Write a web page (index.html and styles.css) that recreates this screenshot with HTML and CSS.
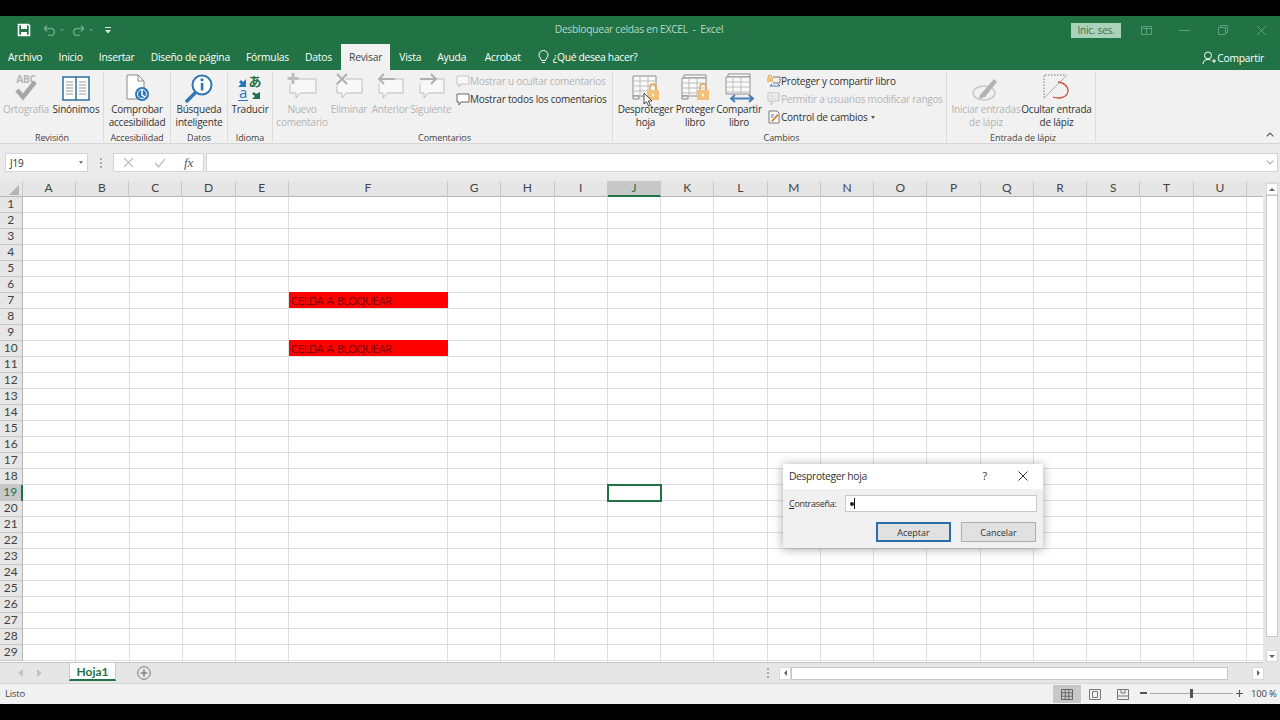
FILE: index.html
```html
<!DOCTYPE html>
<html lang="es">
<head>
<meta charset="utf-8">
<title>Desbloquear celdas en EXCEL - Excel</title>
<link rel="stylesheet" href="styles.css">
</head>
<body>
<div class="app">
  <header class="titlebar">
    <div class="qat">
      <svg class="qi" width="14" height="14" viewBox="0 0 14 14"><path d="M1.500 1.500h10l1 1v10h-11z" fill="none" stroke="#fff" stroke-width="1.600"/><rect x="4" y="2" width="6" height="4" fill="#fff"/><rect x="4" y="9" width="6" height="3.500" fill="#fff"/></svg>
      <svg class="qi dim" width="13" height="12" viewBox="0 0 13 12"><path d="M1 4.500h7a3.500 3.500 0 0 1 0 7H5M1 4.500l3-3M1 4.500l3 3" fill="none" stroke="#6ba888" stroke-width="1.500"/></svg>
      <i class="caret"></i>
      <svg class="qi dim" width="13" height="12" viewBox="0 0 13 12"><path d="M12 4.500H5a3.500 3.500 0 0 0 0 7h3M12 4.500l-3-3M12 4.500l-3 3" fill="none" stroke="#6ba888" stroke-width="1.500"/></svg>
      <i class="caret"></i>
      <svg class="qi more" width="6" height="7" viewBox="0 0 6 7"><path d="M0 0h6v1H0zM0 3h6L3 6.500z" fill="#d8e8de"/></svg>
    </div>
    <div class="doc-title">Desbloquear celdas en EXCEL&nbsp; -&nbsp; Excel</div>
    <div class="win">
      <button class="signin">Inic. ses.</button>
      <svg width="11" height="9" viewBox="0 0 11 9"><path d="M.5.500h10v8H.5zM.5 2.500h10M5.500 2.500v6" fill="none" stroke="#5f9f7c"/></svg>
      <svg width="11" height="1" viewBox="0 0 11 1"><path d="M0 .5h11" stroke="#5f9f7c"/></svg>
      <svg width="10" height="10" viewBox="0 0 10 10"><path d="M2.500 2.500V.5h7v7h-2M.5 2.500h7v7h-7z" fill="none" stroke="#5f9f7c"/></svg>
      <svg width="11" height="11" viewBox="0 0 11 11"><path d="M1 1l9 9M10 1l-9 9" stroke="#5f9f7c"/></svg>
    </div>
  </header>

  <nav class="tabs">
    <span class="tab">Archivo</span>
    <span class="tab">Inicio</span>
    <span class="tab">Insertar</span>
    <span class="tab">Diseño de página</span>
    <span class="tab">Fórmulas</span>
    <span class="tab">Datos</span>
    <span class="tab active">Revisar</span>
    <span class="tab">Vista</span>
    <span class="tab t-ayuda">Ayuda</span>
    <span class="tab">Acrobat</span>
    <span class="tab tell">
      <svg width="11" height="14" viewBox="0 0 11 14"><path d="M3.500 10.500C3.200 8.500 1 7.500 1 5a4.500 4.500 0 0 1 9 0c0 2.500-2.200 3.500-2.500 5.500zM4 12.500h3" fill="none" stroke="#fff"/></svg>
      ¿Qué desea hacer?
    </span>
    <span class="share">
      <svg width="14" height="14" viewBox="0 0 14 14"><circle cx="6" cy="4.500" r="3.500" fill="none" stroke="#fff"/><path d="M1 13c0-3 2-4.500 5-4.500 1 0 1.800.2 2.500.5M10 10h4M12 8v4" fill="none" stroke="#fff"/></svg>
      Compartir
    </span>
  </nav>

  <section class="ribbon">
    <div class="group g-rev">
      <div class="cmds">
        <div class="cmd w50 off">
          <svg class="ic" width="32" height="30" viewBox="0 0 32 30"><text x="16" y="10" class="abc">ABC</text><path d="M7 17l6 7L25 9" fill="none" stroke="#a6a6a6" stroke-width="4.500"/></svg>
          <span>Ortografía</span>
        </div>
        <div class="cmd w50">
          <svg class="ic" width="32" height="30" viewBox="0 0 32 30"><path d="M3 4h13v23H3zM16 4h13v23H16z" fill="#fff" stroke="#2f6f9f" stroke-width="1.500"/><path d="M6 9h7M6 12h7M6 15h7M6 18h7M6 21h7M19 9h7M19 12h7M19 15h7M19 18h7M19 21h7" stroke="#9a9a9a"/></svg>
          <span>Sinónimos</span>
        </div>
      </div>
      <div class="glabel">Revisión</div>
    </div>
    <div class="group g-acc">
      <div class="cmds">
        <div class="cmd w68">
          <svg class="ic" width="30" height="30" viewBox="0 0 30 30"><path d="M5 2h11l6 6v18H5z" fill="#fff" stroke="#8a8a8a"/><path d="M16 2v6h6" fill="none" stroke="#8a8a8a"/><circle cx="20" cy="21" r="7" fill="#2f78b5"/><circle cx="20" cy="21" r="4.500" fill="none" stroke="#fff"/><path d="M20 17v5l3 2" fill="none" stroke="#fff" stroke-width="1.500"/></svg>
          <span>Comprobar<br>accesibilidad</span>
        </div>
      </div>
      <div class="glabel">Accesibilidad</div>
    </div>
    <div class="group g-dat">
      <div class="cmds">
        <div class="cmd w57">
          <svg class="ic" width="30" height="30" viewBox="0 0 30 30"><path d="M12 19L3 28" stroke="#2f78b5" stroke-width="3.500" stroke-linecap="round"/><circle cx="18" cy="12" r="9.500" fill="#fff" stroke="#2f78b5" stroke-width="2"/><rect x="16.800" y="10" width="2.600" height="7.500" fill="#2f78b5"/><circle cx="18" cy="6.800" r="1.600" fill="#2f78b5"/></svg>
          <span>Búsqueda<br>inteligente</span>
        </div>
      </div>
      <div class="glabel">Datos</div>
    </div>
    <div class="group g-idi">
      <div class="cmds">
        <div class="cmd w44">
          <svg class="ic" width="28" height="30" viewBox="0 0 28 30"><path d="M10 6v8H2l3-3-2-2 2-2 2 2z" fill="#1f78c1"/><text x="19" y="13" class="ja">あ</text><text x="7" y="25" class="lat">a</text><path d="M2 27.500h10" stroke="#1f78c1"/><path d="M16 26v-7h8l-3 3 3 2-2 2-2-2z" fill="#217346" transform="rotate(180 20 22.500)"/></svg>
          <span>Traducir</span>
        </div>
      </div>
      <div class="glabel">Idioma</div>
    </div>
    <div class="group g-com">
      <div class="cmds">
        <div class="cmd w50 off">
          <svg class="ic" width="32" height="30" viewBox="0 0 32 30"><path d="M8 6h22v14H14l-4 5v-5H4v-9" fill="#f8f8f8" stroke="#bdbdbd"/><path d="M7 0v11M1.500 5.500h11" stroke="#bdbdbd" stroke-width="3"/></svg>
          <span>Nuevo<br>comentario</span>
        </div>
        <div class="cmd w44 off">
          <svg class="ic" width="30" height="30" viewBox="0 0 30 30"><path d="M11 6h17v14H12l-4 5v-5H3V10" fill="#f8f8f8" stroke="#bdbdbd"/><path d="M3 1l10 10M13 1L3 11" stroke="#b0b0b0" stroke-width="2"/></svg>
          <span>Eliminar</span>
        </div>
        <div class="cmd w38 off">
          <svg class="ic" width="30" height="30" viewBox="0 0 30 30"><path d="M12 6h16v14H12l-4 5v-5H4V11" fill="#f8f8f8" stroke="#bdbdbd"/><path d="M20 6H4M9 1L4 6l5 5" fill="none" stroke="#b0b0b0" stroke-width="2"/></svg>
          <span>Anterior</span>
        </div>
        <div class="cmd w44 off">
          <svg class="ic" width="30" height="30" viewBox="0 0 30 30"><path d="M18 6h10v14H12l-4 5v-5H4V11" fill="#f8f8f8" stroke="#bdbdbd"/><path d="M4 6h16M15 1l5 5-5 5" fill="none" stroke="#b0b0b0" stroke-width="2"/></svg>
          <span>Siguiente</span>
        </div>
        <div class="stack">
          <div class="sitem off"><svg width="14" height="14" viewBox="0 0 14 14"><path d="M1 2h12v8H5l-2 3v-3H1z" fill="#f8f8f8" stroke="#c4c4c4"/></svg>Mostrar u ocultar comentarios</div>
          <div class="sitem"><svg width="14" height="14" viewBox="0 0 14 14"><path d="M1 2h12v8H5l-2 3v-3H1z" fill="#fff" stroke="#666"/></svg>Mostrar todos los comentarios</div>
        </div>
      </div>
      <div class="glabel">Comentarios</div>
    </div>
    <div class="group g-cam">
      <div class="cmds">
        <div class="cmd w57">
          <svg class="ic" width="32" height="30" viewBox="0 0 32 30"><path class="sh" d="M3 3h23v20H3z"/><path class="gl" d="M3 8h23M3 13h23M3 18h23M10 3v20M18 3v20"/><path d="M3 23h6v3H3z" fill="#eee" stroke="#888"/><rect x="17" y="17" width="12" height="10" fill="#f2c078"/><path d="M20 17v-3a3 3 0 0 1 6 0v3" fill="none" stroke="#e0a850" stroke-width="1.500"/><path d="M23 20.500v3" stroke="#fff" stroke-width="1.500"/></svg>
          <span>Desproteger<br>hoja</span>
        </div>
        <div class="cmd w42">
          <svg class="ic" width="32" height="30" viewBox="0 0 32 30"><path class="sh" d="M5 2h22v3H5z"/><path class="sh" d="M3 5h24v18H3z"/><path class="gl" d="M3 10h24M3 15h24M3 20h24M10 5v18M18 5v18"/><path d="M3 23h6v3H3z" fill="#eee" stroke="#888"/><rect x="18" y="17" width="12" height="10" fill="#f2c078"/><path d="M21 17v-3a3 3 0 0 1 6 0v3" fill="none" stroke="#e0a850" stroke-width="1.500"/><path d="M24 20.500v3" stroke="#fff" stroke-width="1.500"/></svg>
          <span>Proteger<br>libro</span>
        </div>
        <div class="cmd w46">
          <svg class="ic" width="32" height="30" viewBox="0 0 32 30"><path class="sh" d="M5 1h22v3H5z"/><path class="sh" d="M3 4h24v17H3z"/><path class="gl" d="M3 9h24M3 14h24M3 19h24M10 4v17M18 4v17"/><path d="M8 25.500h22M12 22l-4 3.500 4 3.500M26 22l4 3.500-4 3.500" fill="none" stroke="#4a7fb5" stroke-width="2"/></svg>
          <span>Compartir<br>libro</span>
        </div>
        <div class="stack">
          <div class="sitem"><svg width="14" height="14" viewBox="0 0 14 14"><rect x="0" y="3" width="6" height="5" fill="#f2c078"/><path d="M1.500 3V1.500h3V3" fill="none" stroke="#e0a850"/><path d="M6 3h7v6H6" fill="none" stroke="#777"/><path d="M3 12h10M3 12l2-2M13 12l-2-2" stroke="#3f78b0" fill="none"/></svg>Proteger y compartir libro</div>
          <div class="sitem off"><svg width="14" height="14" viewBox="0 0 14 14"><path d="M1 1h11v8H6l-2 4V9H1z" fill="#f4f4f4" stroke="#c4c4c4"/><path d="M1 4h11M1 7h11M5 1v8" stroke="#d4d4d4"/></svg>Permitir a usuarios modificar rangos</div>
          <div class="sitem"><svg width="14" height="14" viewBox="0 0 14 14"><path d="M2 1h8l2 2v10H2z" fill="#fff" stroke="#777"/><path d="M4 11l6-7 1.500 1.500-6 6.500z" fill="#d9853b"/><path d="M4 5h3M4 7h2" stroke="#3f78b0"/></svg>Control de cambios<i class="mini"></i></div>
        </div>
      </div>
      <div class="glabel">Cambios</div>
    </div>
    <div class="group g-ink">
      <div class="cmds">
        <div class="cmd w70 off">
          <svg class="ic" width="32" height="30" viewBox="0 0 32 30"><ellipse cx="14" cy="20" rx="11" ry="7" fill="none" stroke="#c8c8c8" stroke-width="1.500"/><path d="M10 22L24 6l3 3-12 15-6 2z" fill="#b3b3b3"/></svg>
          <span>Iniciar entradas<br>de lápiz</span>
        </div>
        <div class="cmd w71">
          <svg class="ic" width="32" height="30" viewBox="0 0 32 30"><path d="M3 25V2h22" fill="none" stroke="#777" stroke-dasharray="1.500 1.500"/><path d="M3 25L26 2" stroke="#aaa"/><path d="M17 9c8 1 12 7 9 12-2 4-9 5-14 3" fill="none" stroke="#c9543a" stroke-width="1.300"/></svg>
          <span>Ocultar entrada<br>de lápiz</span>
        </div>
      </div>
      <div class="glabel">Entrada de lápiz</div>
    </div>
    <svg class="collapse" width="8" height="5" viewBox="0 0 8 5"><path d="M.7 4.300L4 1l3.300 3.300" fill="none" stroke="#555" stroke-width="1.200"/></svg>
  </section>

  <section class="formula">
    <div class="namebox"><span>J19</span><i class="mini"></i></div>
    <span class="grip"></span>
    <div class="fxbox">
      <svg width="11" height="11" viewBox="0 0 11 11"><path d="M1 1l9 9M10 1l-9 9" stroke="#bdbdbd" stroke-width="1.200"/></svg>
      <svg width="12" height="10" viewBox="0 0 12 10"><path d="M1 5l3.500 4L11 1" fill="none" stroke="#bdbdbd" stroke-width="1.200"/></svg>
      <span class="fx">fx</span>
    </div>
    <div class="finput"><svg width="8" height="5" viewBox="0 0 8 5"><path d="M.7.700L4 4l3.300-3.300" fill="none" stroke="#aaa" stroke-width="1.100"/></svg></div>
  </section>

  <section class="workarea">
    <div class="grid">
      <div class="row head">
        <span class="corner"><i></i></span><span>A</span><span>B</span><span>C</span><span>D</span><span>E</span><span>F</span><span>G</span><span>H</span><span>I</span><span class="cur">J</span><span>K</span><span>L</span><span>M</span><span>N</span><span>O</span><span>P</span><span>Q</span><span>R</span><span>S</span><span>T</span><span>U</span>
      </div>
      <div class="sheet">
        <div class="row"><span class="rh">1</span></div>
        <div class="row"><span class="rh">2</span></div>
        <div class="row"><span class="rh">3</span></div>
        <div class="row"><span class="rh">4</span></div>
        <div class="row"><span class="rh">5</span></div>
        <div class="row"><span class="rh">6</span></div>
        <div class="row"><span class="rh">7</span><span class="red">CELDA A BLOQUEAR</span></div>
        <div class="row"><span class="rh">8</span></div>
        <div class="row"><span class="rh">9</span></div>
        <div class="row"><span class="rh">10</span><span class="red">CELDA A BLOQUEAR</span></div>
        <div class="row"><span class="rh">11</span></div>
        <div class="row"><span class="rh">12</span></div>
        <div class="row"><span class="rh">13</span></div>
        <div class="row"><span class="rh">14</span></div>
        <div class="row"><span class="rh">15</span></div>
        <div class="row"><span class="rh">16</span></div>
        <div class="row"><span class="rh">17</span></div>
        <div class="row"><span class="rh">18</span></div>
        <div class="row"><span class="rh cur">19</span><span class="sel"></span></div>
        <div class="row"><span class="rh">20</span></div>
        <div class="row"><span class="rh">21</span></div>
        <div class="row"><span class="rh">22</span></div>
        <div class="row"><span class="rh">23</span></div>
        <div class="row"><span class="rh">24</span></div>
        <div class="row"><span class="rh">25</span></div>
        <div class="row"><span class="rh">26</span></div>
        <div class="row"><span class="rh">27</span></div>
        <div class="row"><span class="rh">28</span></div>
        <div class="row"><span class="rh">29</span></div>
      </div>
    </div>
    <aside class="vscroll">
      <b class="sbtn"><i class="up"></i></b>
      <b class="sthumb"></b>
      <b class="sbtn"><i class="down"></i></b>
    </aside>
  </section>

  <section class="sheetbar">
    <div class="navs">
      <svg width="5" height="8" viewBox="0 0 5 8"><path d="M5 0v8L0 4z" fill="#c4c4c4"/></svg>
      <svg width="5" height="8" viewBox="0 0 5 8"><path d="M0 0v8l5-4z" fill="#c4c4c4"/></svg>
    </div>
    <div class="sheettab">Hoja1</div>
    <svg class="addsheet" width="14" height="14" viewBox="0 0 14 14"><circle cx="7" cy="7" r="6.300" fill="none" stroke="#777"/><path d="M7 3.500v7M3.500 7h7" stroke="#666" stroke-width="1.200"/></svg>
    <span class="split"></span>
    <div class="hscroll">
      <b class="sbtn small"><i class="left"></i></b>
      <b class="hthumb"></b>
      <b class="sbtn small"><i class="right"></i></b>
    </div>
  </section>

  <footer class="status">
    <span class="ready">Listo</span>
    <div class="views">
      <span class="view on"><svg width="12" height="11" viewBox="0 0 12 11"><path d="M.5.500h11v10H.5zM.5 3.800h11M.5 7.200h11M4.200.500v10M7.800.500v10" fill="none" stroke="#666"/></svg></span>
      <span class="view"><svg width="12" height="11" viewBox="0 0 12 11"><path d="M.5.500h11v10H.5z" fill="none" stroke="#777"/><path d="M3.500 2.500h5v6h-5z" fill="none" stroke="#777"/></svg></span>
      <span class="view"><svg width="12" height="11" viewBox="0 0 12 11"><path d="M.5.500h11v10H.5zM.5 7h11M4 .500V4h4V.500" fill="none" stroke="#777"/></svg></span>
    </div>
    <div class="zoom">
      <i class="zminus"></i>
      <div class="track"><i class="knob"></i></div>
      <svg width="7" height="7" viewBox="0 0 7 7"><path d="M3.500 0v7M0 3.500h7" stroke="#555" stroke-width="1.200"/></svg>
      <span class="pct">100 %</span>
    </div>
  </footer>
</div>

<div class="dialog">
  <div class="dlg-head">
    <span>Desproteger hoja</span>
    <span class="help">?</span>
    <svg width="10" height="10" viewBox="0 0 10 10"><path d="M.5.500l9 9M9.500.500l-9 9" stroke="#333"/></svg>
  </div>
  <div class="dlg-body">
    <div class="pwd"><label><u>C</u>ontraseña:</label><div class="pwinput"><i class="dot"></i><i class="caretline"></i></div></div>
    <div class="dlg-btns"><button class="primary">Aceptar</button><button>Cancelar</button></div>
  </div>
</div>

<svg class="cursor" width="10" height="15" viewBox="0 0 10 15"><path d="M1 1v11l2.500-2.300L5.500 14l1.800-.8-2-4.200H9z" fill="#fff" stroke="#222" stroke-width=".8"/></svg>
</body>
</html>
```
FILE: styles.css
```css
* { box-sizing: border-box; }
html, body { margin: 0; height: 100%; }
body {
  background: #000;
  padding: 16px 0;
  font-family: "Open Sans", "Noto Sans", sans-serif;
  font-size: 10px;
  letter-spacing: -.22px;
  color: #333;
  overflow: hidden;
}
.app { height: 688px; display: flex; flex-direction: column; background: #f1f1f1; }

/* title bar */
.titlebar {
  height: 28px; background: #217346; display: flex; align-items: center;
  position: relative; padding-left: 17px; flex: none;
}
.qat { display: flex; align-items: center; }
.qat .qi { flex: none; }
.qat .dim:nth-child(2) { margin-left: 12px; }
.qat .dim:nth-child(4) { margin-left: 8px; }
.qat .more { margin-left: 12px; }
.caret { width: 0; height: 0; border: 2px solid transparent; border-top: 2px solid #5f9f7c; border-bottom: 0; margin-left: 4px; }
.doc-title { position: absolute; left: 0; right: 2px; top: 6px; text-align: center; color: #b9d6c5; font-size: 10.300px; letter-spacing: -.3px; }
.win { margin-left: auto; display: flex; align-items: center; padding-right: 13px; }
.signin {
  width: 50px; height: 15px; background: #a9d3b8; color: #3c6e52; border: 0; padding: 0;
  font: 10px "Open Sans", sans-serif; letter-spacing: -.22px; margin-right: 20px;
}
.win svg { flex: none; }
.win svg:nth-of-type(1) { margin-right: 27px; }
.win svg:nth-of-type(2) { margin-right: 28px; }
.win svg:nth-of-type(3) { margin-right: 28px; }

/* tabs */
.tabs { height: 26px; background: #217346; display: flex; color: #fff; align-items: stretch; flex: none; font-size: 10.300px; letter-spacing: -.24px; }
.tab { padding: 6px 8.100px 0; white-space: nowrap; }
.tab.active { background: #f1f1f1; color: #444; margin: 0 1px; }
.t-ayuda { padding-right: 10.500px; }
.tell { display: flex; align-items: flex-start; gap: 4px; padding-top: 6px; margin-left: 1px; letter-spacing: -.3px; }
.share { margin-left: auto; margin-right: 16px; padding-top: 7px; display: flex; gap: 1px; align-items: flex-start; }

/* ribbon */
.ribbon { height: 74px; background: #f1f1f1; border-bottom: 1px solid #d6d6d6; display: flex; position: relative; flex: none; padding-top: 2px; }
.group { display: flex; flex-direction: column; height: 70px; border-right: 1px solid #dcdcdc; position: relative; flex: none; }
.g-rev { width: 104px; padding-left: 1px; }
.g-acc { width: 67px; }
.g-dat { width: 57px; }
.g-idi { width: 45px; }
.g-com { width: 340px; padding-left: 4px; }
.g-cam { width: 334px; padding-left: 4px; }
.g-ink { width: 149px; padding-left: 4px; }
.g-acc .cmds, .g-dat .cmds, .g-idi .cmds { justify-content: center; }
.cmds { display: flex; height: 55px; flex: none; padding-top: 1px; }
.glabel { text-align: center; font-size: 9px; color: #444; line-height: 12px; margin-top: 5px; letter-spacing: -.1px; }
.cmd { display: flex; flex-direction: column; align-items: center; text-align: center; white-space: nowrap; line-height: 13px; color: #333; flex: none; }
.cmd .ic { flex: none; height: 30px; }
.cmd.off span, .sitem.off { color: #b4b4b4; }
.w38 { width: 38px; } .w42 { width: 42px; } .w44 { width: 44px; } .w46 { width: 46px; }
.w50 { width: 50px; } .w57 { width: 57px; } .w68 { width: 66px; } .w70 { width: 70px; } .w71 { width: 71px; }
.stack { display: flex; flex-direction: column; margin: -1px 0 0 3px; }
.g-cam .stack { margin-left: 5px; }
.sitem { display: flex; align-items: center; height: 18px; white-space: nowrap; }
.sitem svg { flex: none; }
.abc { font: 700 10px "Open Sans", sans-serif; fill: #b4b4b4; text-anchor: middle; }
.ja { font: 700 13px "Noto Sans CJK JP", sans-serif; fill: #217346; text-anchor: middle; }
.lat { font: 400 15px "Open Sans", sans-serif; fill: #1f78c1; text-anchor: middle; }
.sh { fill: #fafafa; stroke: #8c8c8c; }
.gl { fill: none; stroke: #bcbcbc; }
.mini { display: inline-block; width: 0; height: 0; border: 2.500px solid transparent; border-top: 3px solid #555; border-bottom: 0; margin-left: 3px; }
.collapse { position: absolute; right: 6px; bottom: 6px; }

/* formula bar */
.formula { height: 37px; background: #ebebeb; display: flex; align-items: center; padding: 0 2px 0 5px; flex: none; }
.namebox { width: 83px; height: 19px; background: #fff; border: 1px solid #d4d4d4; display: flex; align-items: center; justify-content: space-between; padding: 0 4px; font-size: 10px; }
.namebox .mini { border-top-color: #777; }
.grip { width: 2px; height: 10px; margin: 0 11px 0 12px; border-left: 2px dotted #aaa; }
.fxbox { width: 91px; height: 19px; background: #fff; border: 1px solid #d4d4d4; display: flex; align-items: center; gap: 20px; padding-left: 9px; margin-right: 2px; }
.fx { font: italic 13px "Liberation Serif", serif; color: #555; margin-left: -2px; }
.finput { flex: 1; height: 19px; background: #fff; border: 1px solid #d4d4d4; display: flex; align-items: center; justify-content: flex-end; padding-right: 3px; }

/* grid */
.workarea { height: 482px; display: flex; background: #e6e6e6; flex: none; }
.grid { width: 1263px; flex: none; display: flex; flex-direction: column; font-family: Lato, sans-serif; color: #444; letter-spacing: 0; border-bottom: 1px solid #c6c6c6; }
.row { display: grid; grid-template-columns: 22.500px repeat(5, 53.300px) 159px repeat(15, 53.270px) 1fr; height: 16px; align-items: stretch; font-size: 11.500px; }
.row.head { height: 16px; background: #e6e6e6; border-bottom: 1px solid #b5b5b5; }
.row.head span { text-align: center; line-height: 14px; border-right: 1px solid #c8c8c8; color: #444; font-size: 12px; }
.row.head .corner { position: relative; }
.corner i { position: absolute; right: 3px; bottom: 2px; width: 0; height: 0; border-style: solid; border-width: 0 0 10px 10px; border-color: transparent transparent #b5b5b5; }
.row.head .cur { background: #c8c8c8; border-bottom: 2px solid #217346; height: 16px; line-height: 14px; color: #217346; }
.sheet {
  flex: 1; overflow: hidden; background-color: #fff;
  /* column rules: A-E, F, G-U */
  background-image:
    repeating-linear-gradient(90deg, transparent 0 52.300px, #dedede 52.300px 53.300px),
    linear-gradient(90deg, transparent 158px, #dedede 158px),
    repeating-linear-gradient(90deg, transparent 0 52.270px, #dedede 52.270px 53.270px);
  background-size: 266.500px 100%, 159px 100%, 800px 100%;
  background-position: 22.500px 0, 289px 0, 448px 0;
  background-repeat: no-repeat;
}
.sheet .row { border-bottom: 1px solid #dedede; }
.rh { background: #e6e6e6; text-align: center; line-height: 14.500px; border-right: 1px solid #b5b5b5; border-bottom: 1px solid #c8c8c8; margin-bottom: -1px; color: #444; font-size: 12px; }
.rh.cur { background: #c8c8c8; color: #217346; border-right: 2px solid #217346; }
.red { grid-column: 7; background: #ff0000; color: #800000; font-size: 11px; letter-spacing: -.5px; word-spacing: 1.500px; line-height: 17px; padding-left: 2px; height: 16px; margin-top: -1px; white-space: nowrap; }
.sel { grid-column: 11; border: 2px solid #217346; margin: -1px; height: 18px; background: transparent; }

/* scrollbars */
.vscroll { flex: 1; display: flex; flex-direction: column; padding: 2px 2px 1px 3px; background: #e6e6e6; }
.sbtn { background: #fff; border: 1px solid #d8d8d8; display: flex; align-items: center; justify-content: center; height: 12px; flex: none; }
.sthumb { flex: none; height: 442px; background: #fff; border: 1px solid #c6c6c6; margin-bottom: auto; }
.up { width: 0; height: 0; border: 3px solid transparent; border-bottom: 3px solid #666; border-top: 0; }
.down { width: 0; height: 0; border: 3px solid transparent; border-top: 3px solid #666; border-bottom: 0; }
.left { width: 0; height: 0; border: 3px solid transparent; border-right: 3px solid #666; border-left: 0; }
.right { width: 0; height: 0; border: 3px solid transparent; border-left: 3px solid #666; border-right: 0; }

/* sheet tabs */
.sheetbar { height: 20px; background: #e6e6e6; display: flex; align-items: stretch; flex: none; position: relative; }
.navs { display: flex; align-items: center; gap: 14px; width: 69px; padding-left: 18px; }
.sheettab { width: 47px; background: #fff; color: #217346; font: 700 12px Lato, sans-serif; letter-spacing: 0; text-align: center; line-height: 18px; height: 18px; border-bottom: 2px solid #217346; border-left: 1px solid #ccc; border-right: 1px solid #ccc; }
.addsheet { align-self: center; margin-left: 21px; }
.split { margin-left: auto; width: 2px; height: 10px; align-self: center; border-left: 2px dotted #aaa; margin-right: 10px; }
.hscroll { width: 485px; display: flex; align-items: center; margin-right: 16px; }
.hscroll .small { width: 12px; height: 13px; }
.hthumb { width: 437px; height: 13px; background: #fff; border: 1px solid #c6c6c6; margin-right: 24px; }

/* status */
.status { flex: 1; background: #f1f1f1; display: flex; align-items: center; border-top: 1px solid #d8d8d8; padding: 0 0 2px 5px; font-size: 9.500px; }
.ready { color: #444; }
.views { margin-left: auto; display: flex; height: 100%; margin-bottom: -2px; }
.view { width: 28px; display: flex; align-items: center; justify-content: center; }
.view.on { background: #c8c8c8; }
.zoom { display: flex; align-items: center; margin-left: 3px; margin-right: 3px; }
.zminus { width: 7px; height: 2px; background: #555; }
.track { width: 83px; height: 1px; background: #aaa; margin: 0 3px; position: relative; }
.knob { position: absolute; left: 40px; top: -4px; width: 3px; height: 9px; background: #555; }
.pct { margin-left: 8px; color: #444; font-size: 9.500px; width: 26px; white-space: nowrap; }

/* password dialog */
.dialog {
  position: absolute; left: 783px; top: 464px; width: 260px; height: 84px;
  background: #f0f0f0; box-shadow: 0 1px 10px rgba(0, 0, 0, .35);
}
.dlg-head { height: 25px; background: #fff; display: flex; align-items: center; padding: 0 15px 2px 6px; font-size: 10.300px; letter-spacing: -.35px; color: #333; }
.dlg-head .help { margin-left: auto; margin-right: 31px; font-size: 11px; }
.dlg-body { padding: 6px 7px 0 6px; }
.pwd { display: flex; align-items: center; justify-content: space-between; font-size: 9px; letter-spacing: -.3px; }
.pwinput { width: 192px; height: 17px; background: #fff; border: 1px solid #c8c8c8; position: relative; display: flex; align-items: center; padding-left: 4px; margin-right: -1px; }
.dot { width: 4px; height: 4px; border-radius: 50%; background: #222; }
.caretline { width: 1px; height: 11px; background: #111; }
.dlg-btns { display: flex; justify-content: flex-end; gap: 10px; margin-top: 10px; }
.dlg-btns button { width: 75px; height: 20px; background: #e1e1e1; border: 1px solid #adadad; padding: 0; font: 9px "Open Sans", sans-serif; color: #333; }
.dlg-btns .primary { border: 2px solid #2a6da8; }
.cursor { position: absolute; left: 643px; top: 92px; }
```
